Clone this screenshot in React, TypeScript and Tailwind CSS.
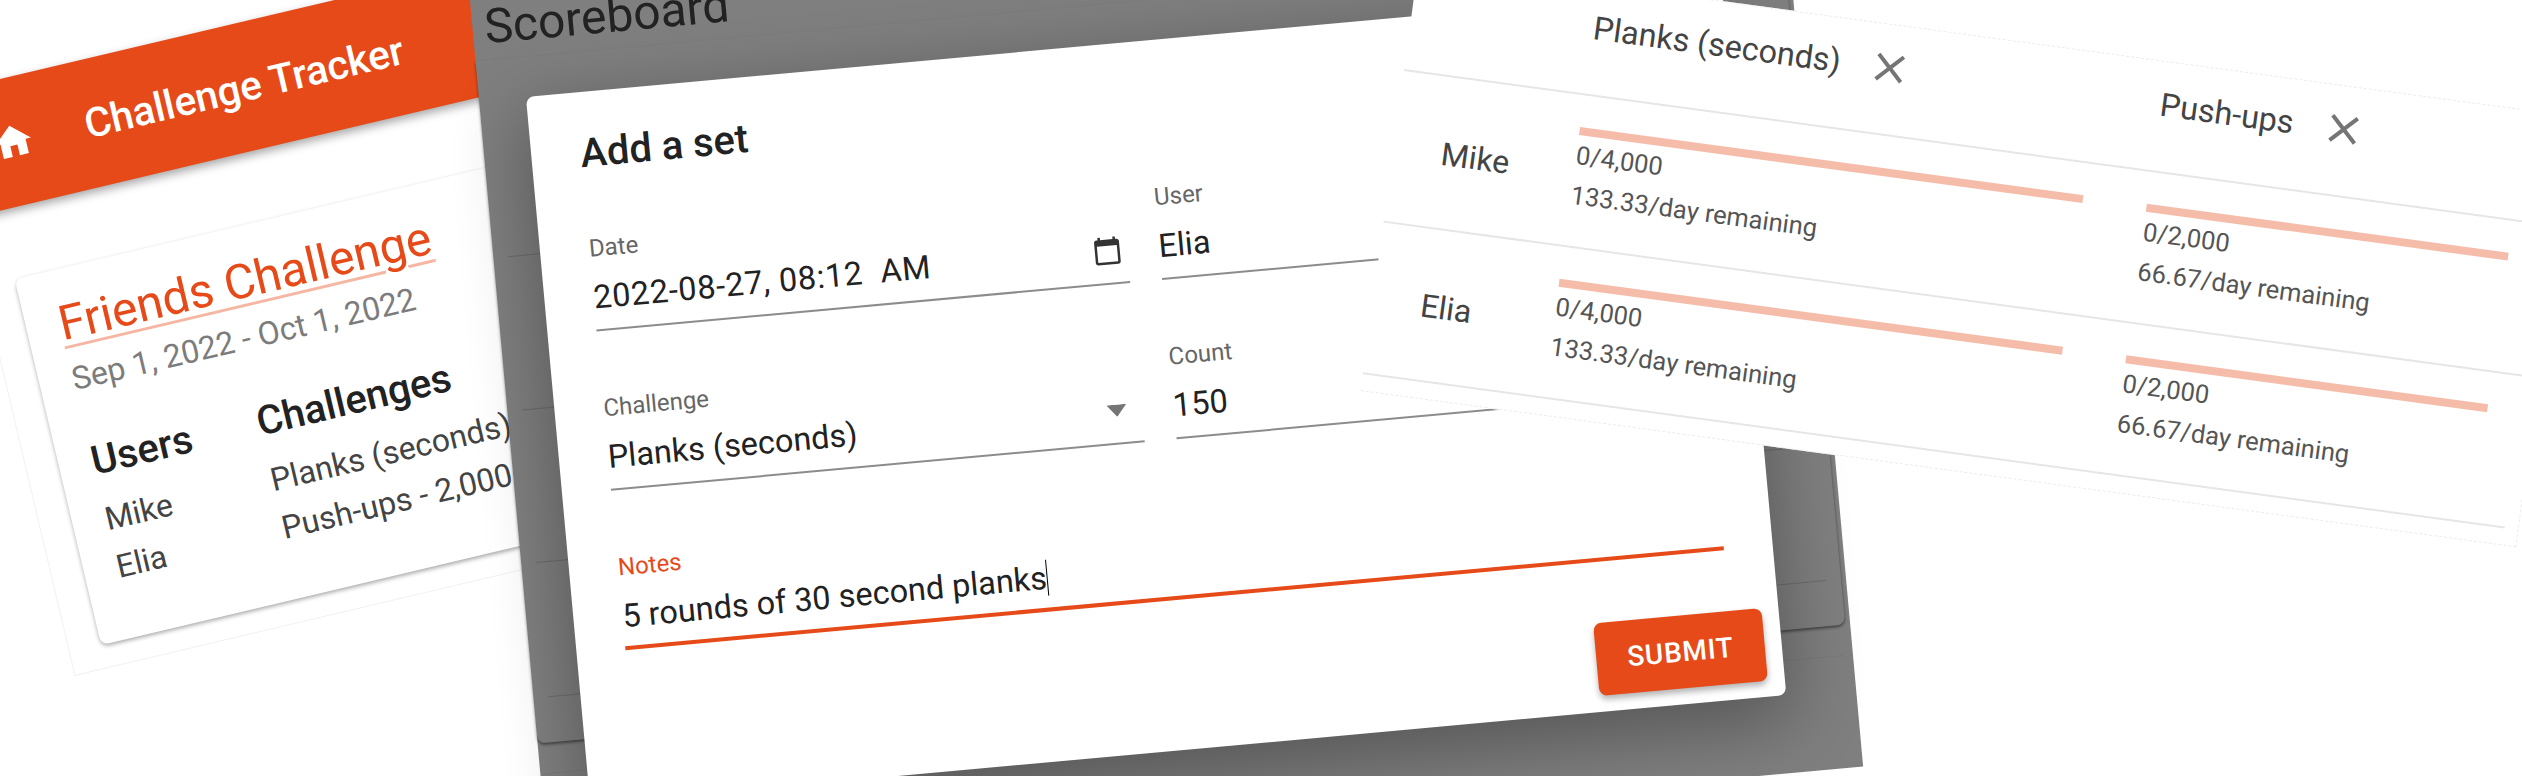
const Close = () => (
  <svg viewBox="0 0 24 24" className="h-12 w-12 shrink-0 fill-[#757575]">
    <path d="M19 6.41 17.59 5 12 10.59 6.41 5 5 6.41 10.59 12 5 17.59 6.41 19 12 13.41 17.59 19 19 17.59 13.41 12z" />
  </svg>
);

// the tracker page, tilted on the left
const TrackerPage = () => (
  <div className="absolute left-[-63px] top-[94px] flex h-[598px] w-[760px] origin-top-left rotate-[-13.3deg] flex-col border-b border-l border-[#f1f1f1] bg-white">
    <div className="flex h-[128px] shrink-0 items-center bg-[#e64a19] pl-10 text-white shadow-[0_4px_10px_rgba(0,0,0,0.35)]">
      <svg viewBox="0 0 24 24" className="h-11 w-11 fill-white">
        <path d="M10 20v-6h4v6h5v-8h3L12 3 2 12h3v8z" />
      </svg>
      <span className="ml-[52px] text-[40.6px] font-medium leading-[48px]">Challenge Tracker</span>
    </div>
    <div className="ml-8 mt-[70px] h-[376px] w-[700px] rounded-lg bg-white pl-[33px] pt-[27px] shadow-[0_2px_4px_rgba(0,0,0,0.35)]">
      <div className="text-[48px] leading-[56px] text-[#e64a19] underline decoration-[#e64a19]/40 decoration-[3px] underline-offset-[6px]">Friends Challenge</div>
      <div className="mt-2 text-[32px] leading-10 text-[#7c7c7c]">Sep 1, 2022 - Oct 1, 2022</div>
      <div className="mt-[41px] flex text-[#444]">
        <div className="w-[170px]">
          <div className="text-[40px] font-medium leading-[48px] text-[#222]">Users</div>
          <div className="mt-[11px] text-[32px] leading-[49px]">
            <div>Mike</div>
            <div>Elia</div>
          </div>
        </div>
        <div>
          <div className="text-[40px] font-medium leading-[48px] text-[#222]">Challenges</div>
          <div className="mt-[11px] text-[32px] leading-[49px]">
            <div>Planks (seconds) - 4,000</div>
            <div>Push-ups - 2,000</div>
          </div>
        </div>
      </div>
    </div>
  </div>
);

const Field = ({ label, value, children, wide }: { label: string; value: string; children?: React.ReactNode; wide?: boolean }) => (
  <div className="h-[98px] border-b-2 border-[#8c8c8c]">
    <div className="text-2xl leading-[30px] text-[#666]">{label}</div>
    <div className="mt-[14px] flex items-center justify-between text-[32.5px] leading-10 text-[#222]">
      <span className={wide ? 'whitespace-pre tracking-[0.65px]' : 'whitespace-pre'}>{value}</span>
      {children}
    </div>
  </div>
);

const AddSetDialog = () => (
  <div className="absolute left-[47px] top-[200px] h-[710px] w-[1201px] rounded-lg bg-white pl-[49px] pr-[49px] pt-[38px] shadow-[0_22px_70px_6px_rgba(0,0,0,0.3)]">
    <div className="text-[40px] font-medium leading-[48px] text-[#222]">Add a set</div>
    <div className="mt-14 grid grid-cols-2 gap-x-8 gap-y-[62px]">
      <Field label="Date" value="2022-08-27, 08:12  AM" wide>
        <svg viewBox="0 0 24 24" className="mr-[5px] h-[30px] w-[30px] fill-[#333]">
          <path d="M20 3h-1V1h-2v2H7V1H5v2H4c-1.1 0-2 .9-2 2v16c0 1.1.9 2 2 2h16c1.1 0 2-.9 2-2V5c0-1.1-.9-2-2-2zm0 18H4V8h16v13z" />
        </svg>
      </Field>
      <Field label="User" value="Elia" />
      <Field label="Challenge" value="Planks (seconds)">
        <svg viewBox="0 0 20 12" className="mr-[15px] h-3 w-5 fill-[#757575]">
          <path d="M0 0h20L10 12z" />
        </svg>
      </Field>
      <Field label="Count" value="150" />
      <div className="col-span-2 h-[98px] border-b-4 border-[#e64a19]">
        <div className="text-2xl leading-[30px] text-[#e64a19]">Notes</div>
        <div className="mt-[14px] flex items-center text-[32.5px] leading-10 text-[#222]">
          <span>5 rounds of 30 second planks</span>
          <span className="h-9 w-px bg-black" />
        </div>
      </div>
    </div>
    <div className="-mr-8 mt-[61px] flex justify-end">
      <div className="flex h-[73px] w-[169px] items-center justify-center rounded-lg bg-[#e64a19] text-[28px] font-medium tracking-[0.8px] text-white shadow-[0_4px_6px_rgba(0,0,0,0.3)]">
        SUBMIT
      </div>
    </div>
  </div>
);

// dimmed scoreboard behind the modal
const ScoreboardBackdrop = () => (
  <div className="absolute left-[461px] top-[-98px] h-[988px] w-[1318px] origin-top-left rotate-[-5.2deg] bg-[#7f7f7f] pt-[99px]">
    <div className="pl-3 text-5xl leading-[56px] text-[#222]">Scoreboard</div>
    <div className="mt-[5px] h-[685px] w-[1313px] rounded-b-lg px-[15px] pb-[45px] shadow-[0_2px_3px_rgba(0,0,0,0.45)]">
      <div className="h-[198px] border-b border-black/15" />
      <div className="h-[154px] border-b border-black/15" />
      <div className="h-[153px] border-b border-black/15" />
      <div className="h-[135px] border-b border-black/15" />
    </div>
    <div className="mt-[30px] h-[120px] w-[1313px] rounded-t-lg border-t border-black/5" />
    <AddSetDialog />
  </div>
);

const Progress = ({ w, total, perDay }: { w: string; total: string; perDay: string }) => (
  <div className="pt-8 text-[25.5px] leading-8 text-[#555]">
    <div className={`h-2 bg-[#f5bcaa] ${w}`} />
    <div className="mt-1">{total}</div>
    <div className="mt-2">{perDay}</div>
  </div>
);

const UserRow = ({ name }: { name: string }) => (
  <div className="grid h-[153px] grid-cols-[182px_572px_398px] border-b-2 border-[#e6e6e6]">
    <div className="pl-[48px] pt-[57px] text-[32px] leading-10 text-[#444]">{name}</div>
    <Progress w="w-[508px]" total="0/4,000" perDay="133.33/day remaining" />
    <Progress w="w-[365px]" total="0/2,000" perDay="66.67/day remaining" />
  </div>
);

const TablePage = () => (
  <div className="absolute left-[1419px] top-[-40px] h-[435px] w-[1166px] origin-top-left rotate-[7.7deg] border-y border-r border-dashed border-[#ececec] bg-white">
    <div className="w-[1152px]">
      <div className="grid h-[111px] grid-cols-[182px_572px_398px] border-b-2 border-[#e6e6e6] text-[32.4px] leading-10 text-[#444]">
        <div />
        <div className="flex items-center gap-[25px] pb-[24px]">
          <span>Planks (seconds)</span>
          <Close />
        </div>
        <div className="flex items-center gap-[26px] pb-[24px]">
          <span>Push-ups</span>
          <Close />
        </div>
      </div>
      <UserRow name="Mike" />
      <UserRow name="Elia" />
    </div>
  </div>
);

export default function App() {
  return (
    <div className="relative h-[776px] w-[2522px] overflow-hidden bg-white font-[family-name:Roboto,sans-serif]">
      <TrackerPage />
      <ScoreboardBackdrop />
      <TablePage />
    </div>
  );
}
